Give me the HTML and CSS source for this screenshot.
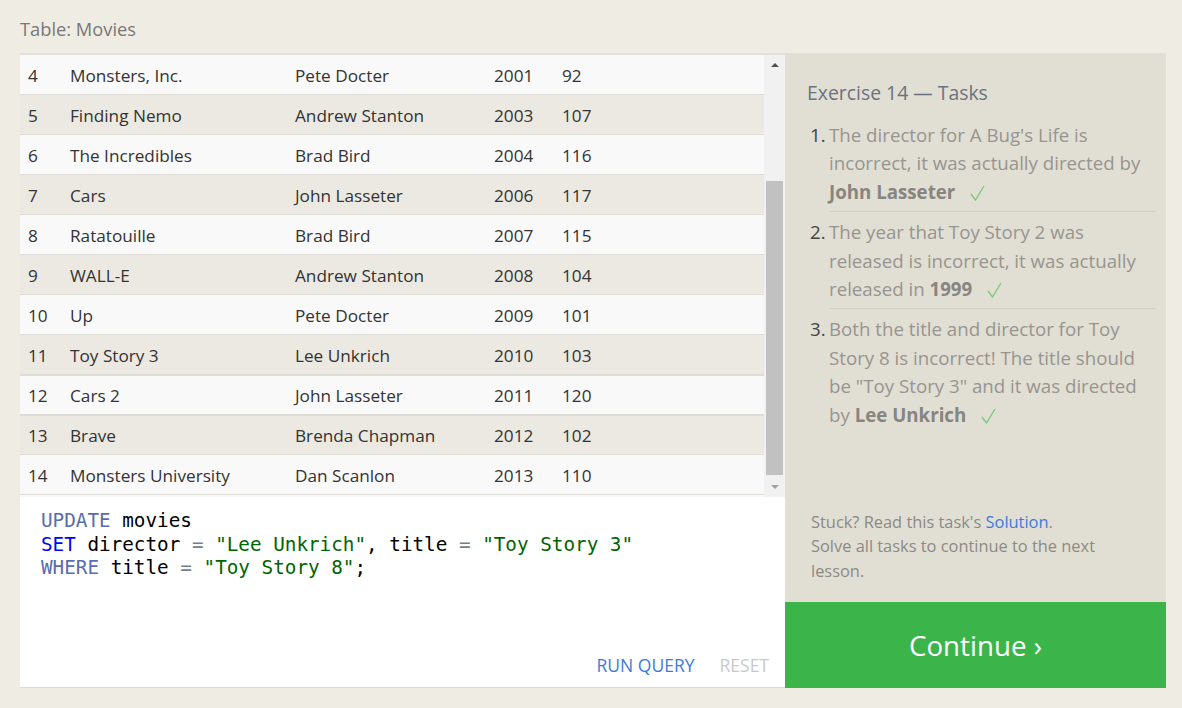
FILE: index.html
```html
<!DOCTYPE html>
<html>
<head>
<meta charset="utf-8">
<link rel="stylesheet" href="styles.css">
</head>
<body>
<div class="page">
  <div class="table-title">Table: Movies</div>
  <div class="main">
    <div class="left">
      <div class="table-wrap">
        <div class="rows">
          <div class="row odd"><span class="c-id">4</span><span class="c-title">Monsters, Inc.</span><span class="c-dir">Pete Docter</span><span class="c-year">2001</span><span class="c-len">92</span></div>
          <div class="row even"><span class="c-id">5</span><span class="c-title">Finding Nemo</span><span class="c-dir">Andrew Stanton</span><span class="c-year">2003</span><span class="c-len">107</span></div>
          <div class="row odd"><span class="c-id">6</span><span class="c-title">The Incredibles</span><span class="c-dir">Brad Bird</span><span class="c-year">2004</span><span class="c-len">116</span></div>
          <div class="row even"><span class="c-id">7</span><span class="c-title">Cars</span><span class="c-dir">John Lasseter</span><span class="c-year">2006</span><span class="c-len">117</span></div>
          <div class="row odd"><span class="c-id">8</span><span class="c-title">Ratatouille</span><span class="c-dir">Brad Bird</span><span class="c-year">2007</span><span class="c-len">115</span></div>
          <div class="row even"><span class="c-id">9</span><span class="c-title">WALL-E</span><span class="c-dir">Andrew Stanton</span><span class="c-year">2008</span><span class="c-len">104</span></div>
          <div class="row odd"><span class="c-id">10</span><span class="c-title">Up</span><span class="c-dir">Pete Docter</span><span class="c-year">2009</span><span class="c-len">101</span></div>
          <div class="row even"><span class="c-id">11</span><span class="c-title">Toy Story 3</span><span class="c-dir">Lee Unkrich</span><span class="c-year">2010</span><span class="c-len">103</span></div>
          <div class="row odd thick"><span class="c-id">12</span><span class="c-title">Cars 2</span><span class="c-dir">John Lasseter</span><span class="c-year">2011</span><span class="c-len">120</span></div>
          <div class="row even thick"><span class="c-id">13</span><span class="c-title">Brave</span><span class="c-dir">Brenda Chapman</span><span class="c-year">2012</span><span class="c-len">102</span></div>
          <div class="row odd"><span class="c-id">14</span><span class="c-title">Monsters University</span><span class="c-dir">Dan Scanlon</span><span class="c-year">2013</span><span class="c-len">110</span></div>
        </div>
        <div class="scrollbar">
          <div class="arrow up"></div>
          <div class="track"><div class="thumb"></div></div>
          <div class="arrow down"></div>
        </div>
      </div>
      <div class="editor">
        <pre class="code"><span class="kw">UPDATE</span> movies
<span class="kw2">SET</span> director <span class="op">=</span> <span class="str">"Lee Unkrich"</span>, title <span class="op">=</span> <span class="str">"Toy Story 3"</span>
<span class="kw">WHERE</span> title <span class="op">=</span> <span class="str">"Toy Story 8"</span>;</pre>
        <div class="actions">
          <span class="run">RUN QUERY</span>
          <span class="reset">RESET</span>
        </div>
      </div>
    </div>
    <div class="right">
      <div class="tasks">
        <div class="tasks-title">Exercise 14 — Tasks</div>
        <ol class="task-list">
          <li class="task"><span class="num">1.</span><div class="task-text">The director for A Bug's Life is incorrect, it was actually directed by <b>John Lasseter</b> <svg class="check" width="15" height="16" viewBox="0 0 15 16"><polyline points="1,9 5.5,15 14,1" fill="none" stroke="#7ccb7c" stroke-width="1.4"/></svg></div></li>
          <li class="task"><span class="num">2.</span><div class="task-text">The year that Toy Story 2 was released is incorrect, it was actually released in <b>1999</b> <svg class="check" width="15" height="16" viewBox="0 0 15 16"><polyline points="1,9 5.5,15 14,1" fill="none" stroke="#7ccb7c" stroke-width="1.4"/></svg></div></li>
          <li class="task last"><span class="num">3.</span><div class="task-text">Both the title and director for Toy Story 8 is incorrect! The title should be "Toy Story 3" and it was directed by <b>Lee Unkrich</b> <svg class="check" width="15" height="16" viewBox="0 0 15 16"><polyline points="1,9 5.5,15 14,1" fill="none" stroke="#7ccb7c" stroke-width="1.4"/></svg></div></li>
        </ol>
        <div class="stuck">Stuck? Read this task's <span class="link">Solution</span>.<br>Solve all tasks to continue to the next lesson.</div>
      </div>
      <div class="continue">Continue ›</div>
    </div>
  </div>
</div>
</body>
</html>
```

FILE: styles.css
```css
* { box-sizing: border-box; }
html, body { margin: 0; padding: 0; }
body {
  background: #efece4;
  font-family: "Open Sans", "Noto Sans", sans-serif;
  width: 1182px;
  height: 708px;
  overflow: hidden;
}
.page {
  padding: 14px 16px 0 20px;
}
.table-title {
  height: 39px;
  font-size: 18.3px;
  line-height: 30px;
  color: #787878;
}
.main {
  display: flex;
  height: 635px;
}
.left {
  width: 765px;
  display: flex;
  flex-direction: column;
  border-bottom: 1px solid #dcdad3;
}
.table-wrap {
  height: 444px;
  border-top: 2px solid #e2e0da;
  display: flex;
  background: #f9f9f9;
}
.rows {
  flex: 1;
}
.row {
  height: 40px;
  display: flex;
  align-items: center;
  padding-top: 1px;
  border-bottom: 1px solid #dedcd6;
  font-size: 17.2px;
  color: #333;
}
.row.odd { background: #f9f9f9; }
.row.even { background: #ebe9e1; }
.row.thick { border-top: 1px solid #dedcd6; padding-top: 0; }
.c-id { width: 50px; padding-left: 8px; }
.c-title { width: 225px; }
.c-dir { width: 199px; }
.c-year { width: 68px; }
.c-len { width: 60px; }
.scrollbar {
  width: 21px;
  background: #f1f1f1;
  display: flex;
  flex-direction: column;
}
.arrow {
  height: 20px;
  display: flex;
  align-items: center;
  justify-content: center;
}
.arrow.up::before {
  content: "";
  border-left: 4px solid transparent;
  border-right: 4px solid transparent;
  border-bottom: 4px solid #505050;
}
.arrow.down::before {
  content: "";
  border-left: 4px solid transparent;
  border-right: 4px solid transparent;
  border-top: 4px solid #a3a3a3;
}
.track {
  flex: 1;
  padding: 106px 2px 0 2px;
}
.thumb {
  height: 294px;
  background: #c1c1c1;
}
.editor {
  flex: 1;
  background: #fff;
  display: flex;
  flex-direction: column;
  padding: 12px 16px 10px 21px;
}
.code {
  margin: 0;
  font-family: "DejaVu Sans Mono", "Liberation Mono", monospace;
  font-size: 19.3px;
  line-height: 23.5px;
  color: #000;
  flex: 1;
}
.kw { color: #5a6cb0; }
.kw2 { color: #0000ff; }
.str { color: #006400; }
.op { color: #708090; }
.actions {
  display: flex;
  justify-content: flex-end;
  gap: 25px;
  font-size: 17.5px;
}
.run { color: #3b7be0; }
.reset { color: #c9c9c9; }
.right {
  width: 381px;
  display: flex;
  flex-direction: column;
}
.tasks {
  flex: 1;
  background: #e1ded4;
  padding: 26px 10px 19px 22px;
  display: flex;
  flex-direction: column;
}
.tasks-title {
  font-size: 19.4px;
  color: #6b7380;
  line-height: 28px;
  margin-bottom: 14px;
}
.task-list {
  list-style: none;
  margin: 0;
  padding: 0;
}
.task {
  display: flex;
  font-size: 18.7px;
  line-height: 28.4px;
}
.num {
  width: 22px;
  padding-left: 3px;
  color: #444;
  padding-top: 6px;
}
.task:first-child .num { padding-top: 0; }
.task-text {
  flex: 1;
  color: #979590;
  border-bottom: 1px solid #d3d0c6;
  padding: 6px 8px 5px 0;
}
.task:first-child .task-text { padding-top: 0; }
.task.last .task-text { border-bottom: none; }
.task-text b { color: #878580; font-weight: 700; }
.check { margin-left: 10px; vertical-align: -2px; }
.stuck {
  margin-top: auto;
  font-size: 16.4px;
  line-height: 24.5px;
  color: #8c8a85;
  padding-left: 4px;
  padding-right: 20px;
}
.link { color: #3b7be0; }
.continue {
  height: 86px;
  background: #3bb54a;
  color: #fff;
  font-size: 27.7px;
  display: flex;
  align-items: center;
  justify-content: center;
}
```
